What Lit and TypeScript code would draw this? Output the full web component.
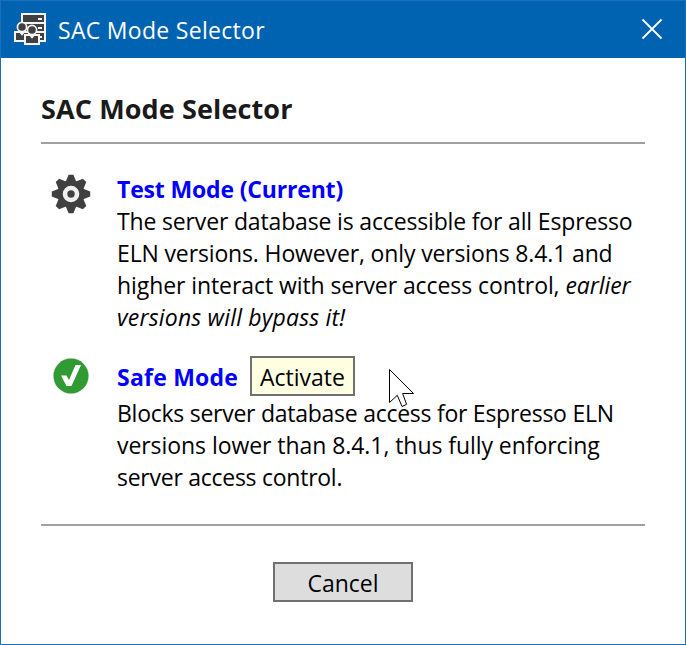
import { LitElement, html, css, svg } from "lit";
import { customElement } from "lit/decorators.js";

const person = (x: number, y: number) => svg`
  <g transform="translate(${x} ${y})">
    <path d="M0 10h14v9H0z" fill="#404040" stroke="#f4f4f4" stroke-width="2"/>
    <path d="M3.5 9.5h7L7 13.8z" fill="#f4f4f4"/>
    <circle cx="7" cy="5" r="4.6" fill="#404040" stroke="#f4f4f4" stroke-width="1.7"/>
  </g>`;

@customElement("app-root")
export class AppRoot extends LitElement {
  static styles = css`
    :host {
      display: block;
      width: 686px;
      height: 645px;
      font-family: "Open Sans", "Noto Sans", sans-serif;
      font-size: 23px;
      line-height: 32px;
      color: #000;
    }
    * { box-sizing: border-box; }
    .window {
      position: relative;
      height: 645px;
      border: 1px solid #1b6fb8;
      background: #fff;
    }
    .titlebar {
      height: 57px;
      background: #0063b1;
      color: #fff;
      display: flex;
      align-items: center;
      padding: 0 22px 0 12px;
    }
    .titlebar .name { margin-left: 11px; flex: 1; padding-top: 1px; white-space: nowrap; letter-spacing: 0.3px; }
    svg { display: block; flex: none; }
    .close { margin-bottom: 2px; }
    .content { padding: 34px 40px 0; }
    h1 {
      margin: 0;
      height: 52px;
      border-bottom: 2px solid #a0a0a0;
      font-size: 27px;
      line-height: 34px;
      font-weight: 700;
      color: #1a1a1a;
      white-space: nowrap;
      letter-spacing: 0.12px;
    }
    .option { display: flex; }
    .test { padding-top: 29px; }
    .safe { padding-top: 21px; }
    .icon { width: 76px; padding: 1px 0 0 10px; }
    .safe .icon { padding-top: 0; }
    .row { display: flex; align-items: center; height: 32px; }
    .safe .row { height: 44px; margin-bottom: -1px; }
    .mode { font-weight: 700; color: #0000ff; white-space: nowrap; }
    .safe .mode { padding-top: 2px; width: 121px; }
    .line { display: block; width: max-content; white-space: nowrap; }
    button {
      font: inherit;
      color: #000;
      border: 2px solid #707070;
      height: 40px;
      padding: 2px 0 0;
      line-height: 34px;
    }
    .activate { width: 105px; margin-left: 12px; background: #ffffe1; }
    .cancel { width: 140px; background: #ddd; }
    .footer {
      margin-top: 31px;
      border-top: 2px solid #a0a0a0;
      padding-top: 36px;
      display: flex;
      justify-content: center;
    }
    .cursor { position: absolute; left: 386px; top: 366px; }
    .t1 { letter-spacing: -0.17px; }
    .t2 { letter-spacing: 0.22px; }
    .l1 { letter-spacing: -0.16px; }
    .l2 { letter-spacing: -0.14px; }
    .l3 { letter-spacing: -0.08px; }
    .l4 { letter-spacing: 0.18px; }
    .l5, .l7 { letter-spacing: -0.26px; }
    .l6 { letter-spacing: -0.06px; }
  `;

  render() {
    return html`
      <div class="window">
        <div class="titlebar">
          <svg width="34" height="33" viewBox="0 0 34 33">
            <path d="M9 1h23v27H9z" fill="#404040" stroke="#f4f4f4" stroke-width="2"/>
            <path d="M9 10h23M9 19h23M25 6h4M25 15h4M25 24h4" stroke="#f4f4f4" stroke-width="2"/>
            ${person(2, 9)}${person(12, 12)}
          </svg>
          <span class="name">SAC Mode Selector</span>
          <svg class="close" width="22" height="22" viewBox="0 0 22 22">
            <path d="M1.5 1.5l19 19M20.5 1.5l-19 19" stroke="#fff" stroke-width="1.8"/>
          </svg>
        </div>
        <div class="content">
          <h1>SAC Mode Selector</h1>
          <div class="option test">
            <div class="icon">
              <svg width="40" height="40" viewBox="-20 -20 40 40">
                ${[0, 45, 90, 135, 180, 225, 270, 315].map(
                  (a) => svg`<path d="M-5.8-11L-2.4-19.2h4.8L5.8-11z" fill="#404040" transform="rotate(${a})"/>`
                )}
                <circle r="13.4" fill="#404040"/>
                <circle r="6" fill="#404040" stroke="#f0f0f0" stroke-width="4.6"/>
              </svg>
            </div>
            <div>
              <div class="row"><span class="mode t1">Test Mode (Current)</span></div>
              <span class="line l1">The server database is accessible for all Espresso</span>
              <span class="line l2">ELN versions. However, only versions 8.4.1 and</span>
              <span class="line l3">higher interact with server access control, <i>earlier</i></span>
              <span class="line l4"><i>versions will bypass it!</i></span>
            </div>
          </div>
          <div class="option safe">
            <div class="icon">
              <svg width="40" height="44" viewBox="-20 -22 40 44">
                <circle r="18.4" fill="#eee"/>
                <circle r="17.5" fill="#329a32"/>
                <path d="M-10-.5h5.5l2.5 4.5L4.5-11h5.5L.5 10h-5z" fill="#fff"/>
              </svg>
            </div>
            <div>
              <div class="row">
                <span class="mode t2">Safe Mode</span>
                <button class="activate">Activate</button>
              </div>
              <span class="line l5">Blocks server database access for Espresso ELN</span>
              <span class="line l6">versions lower than 8.4.1, thus fully enforcing</span>
              <span class="line l7">server access control.</span>
            </div>
          </div>
          <div class="footer"><button class="cancel">Cancel</button></div>
        </div>
        <svg class="cursor" width="28" height="42" viewBox="0 0 28 42">
          <path d="M2.5 2.5v33l7.8-7.2 4.7 11.2 4.6-2.2-4-10.8h10.9z" fill="#fff" stroke="#000"/>
        </svg>
      </div>`;
  }
}
